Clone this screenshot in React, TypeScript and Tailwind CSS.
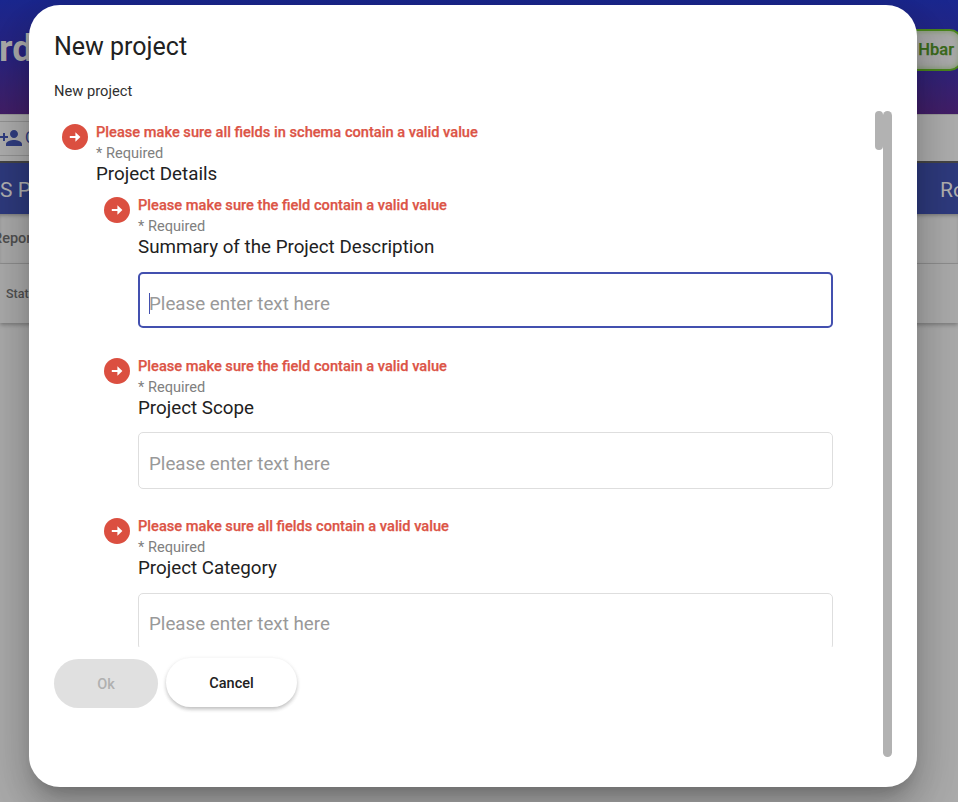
const fields = [
  { error: "Please make sure the field contain a valid value", label: "Summary of the Project Description", focused: true },
  { error: "Please make sure the field contain a valid value", label: "Project Scope", focused: false },
  { error: "Please make sure all fields contain a valid value", label: "Project Category", focused: false },
];

function ArrowBadge() {
  return (
    <svg className="mt-[2px] mr-2 size-[26px] shrink-0" viewBox="0 0 26 26">
      <circle cx="13" cy="13" r="13" fill="#db4f40" />
      <path d="M7.8 12h5.6V8.2l5 4.8-5 4.8V14H7.8z" fill="#fff" />
    </svg>
  );
}

function Heading({ error, label }: { error: string; label: string }) {
  return (
    <>
      <div className="h-[21px] text-[14.63px] leading-[21px] font-medium whitespace-nowrap text-[#dc5446] [-webkit-text-stroke:0.25px_#dc5446]">{error}</div>
      <div className="h-[21px] text-[14.6px] leading-[21px] text-[#808080]">* Required</div>
      <div className="h-5 text-[18.77px] leading-5 whitespace-nowrap text-[#212121]">{label}</div>
    </>
  );
}

function Field({ error, label, focused }: { error: string; label: string; focused: boolean }) {
  return (
    <div className="flex h-[160.4px]">
      <ArrowBadge />
      <div>
        <Heading error={error} label={label} />
        <div
          className={
            focused
              ? "mt-[14.7px] flex h-[56px] w-[695px] items-center rounded-[5px] border-2 border-[#4350af] pt-[7px] pl-[9px]"
              : "mt-[14.7px] flex h-[57px] w-[695px] items-center rounded-[5px] border border-[#dedede] pt-[6px] pl-[10px]"
          }
        >
          {focused && <span className="-mr-px h-[21px] w-px bg-[#4350af]" />}
          <span className="text-[18.77px] leading-6 text-[#999]">Please enter text here</span>
        </div>
      </div>
    </div>
  );
}

function Background() {
  return (
    <div className="flex h-full flex-col bg-[#aaaaaa]">
      <header className="flex h-[114px] shrink-0 items-start justify-between bg-linear-to-b from-[#1a278f] via-[#28237f] to-[#421e67]">
        <div className="mt-[27px] -ml-px text-[37px] leading-[44px] font-bold text-[#aaaaaa]">rd</div>
        <div className="mt-[29px] -mr-1 flex h-[42px] w-[60px] items-center justify-end rounded-xl border-2 border-[#4a851c] bg-[#aaaaaa] pr-[6px] text-[16.5px] font-medium text-[#3b6b1b] shadow-[inset_0_0_6px_#4a851c80] [-webkit-text-stroke:0.25px_#3b6b1b]">
          Hbar
        </div>
      </header>
      <div className="flex h-[49px] shrink-0 items-center border-t border-b-2 border-t-[#999] border-b-[#454545] bg-[#adadad]">
        <div className="flex h-[35px] w-[120px] items-center border-y border-[#929292] text-[16px] text-[#303d80]">
          <svg className="-ml-px size-6" viewBox="0 0 24 24" fill="#303d80">
            <path d="M15 12c2.21 0 4-1.79 4-4s-1.79-4-4-4-4 1.79-4 4 1.79 4 4 4zm-9-2V7H4v3H1v2h3v3h2v-3h3v-2H6zm9 4c-2.67 0-8 1.34-8 4v2h16v-2c0-2.66-5.33-4-8-4z" />
          </svg>
          <span className="ml-[2px]">Create</span>
        </div>
      </div>
      <div className="flex h-[51px] shrink-0 items-center justify-between bg-[#2e3a7d] pt-[4px] text-[21px] text-[#b0b0b0]">
        <span>S P</span>
        <span className="w-[18px] whitespace-nowrap">Ro</span>
      </div>
      <div className="flex h-[50px] shrink-0 items-center border-b border-[#929292] text-[14.5px] font-medium text-[#505050] shadow-[inset_0_3px_4px_-2px_#00000055]">
        <span className="-ml-[7px]">Report</span>
      </div>
      <div className="flex h-[59px] shrink-0 items-center pt-[2px] pl-[6px] text-[12.5px] font-medium text-[#505050] shadow-[0_2px_4px_#00000045]">Status</div>
    </div>
  );
}

export default function App() {
  return (
    <div className="relative h-[802px] w-[958px] overflow-hidden font-[Roboto,sans-serif]">
      <Background />
      <div className="absolute top-[5px] left-[29px] flex h-[782px] w-[888px] flex-col rounded-[31px] bg-white px-[25px] pt-[26px] shadow-[0_11px_15px_-7px_rgba(0,0,0,0.2),0_24px_38px_3px_rgba(0,0,0,0.14),0_9px_46px_8px_rgba(0,0,0,0.12)]">
        <h1 className="h-8 text-[25px] leading-8 text-[#212121]">New project</h1>
        <p className="mt-[18px] h-5 text-[14.7px] leading-[21px] text-[#303030]">New project</p>
        <div className="mt-[10px] flex h-[646px] justify-between">
          <div className="flex flex-col">
            <div className="flex h-[536px] overflow-hidden pt-[11.4px] pl-2">
              <ArrowBadge />
              <div>
                <Heading error="Please make sure all fields in schema contain a valid value" label="Project Details" />
                <div className="mt-[11px] ml-2">
                  {fields.map((f) => (
                    <Field key={f.label} {...f} />
                  ))}
                </div>
              </div>
            </div>
            <div className="mt-3 flex gap-2 text-[14.5px] font-medium">
              <button className="h-[49px] w-[104px] rounded-full bg-[#e0e0e0] pt-[2px] text-[#b0b0b0]">Ok</button>
              <button className="-mt-px h-[49px] w-[131px] rounded-full bg-white pt-[2px] text-[#212121] shadow-[0_3px_4px_-1px_rgba(0,0,0,0.16),0_2px_4px_rgba(0,0,0,0.08),0_1px_5px_rgba(0,0,0,0.08)]">Cancel</button>
            </div>
          </div>
          <div className="flex">
            <div className="h-[39px] w-2 rounded-full bg-[#b2b2b2]" />
            <div className="h-[646px] w-[9px] rounded-full bg-[#b2b2b2]" />
          </div>
        </div>
      </div>
    </div>
  );
}
